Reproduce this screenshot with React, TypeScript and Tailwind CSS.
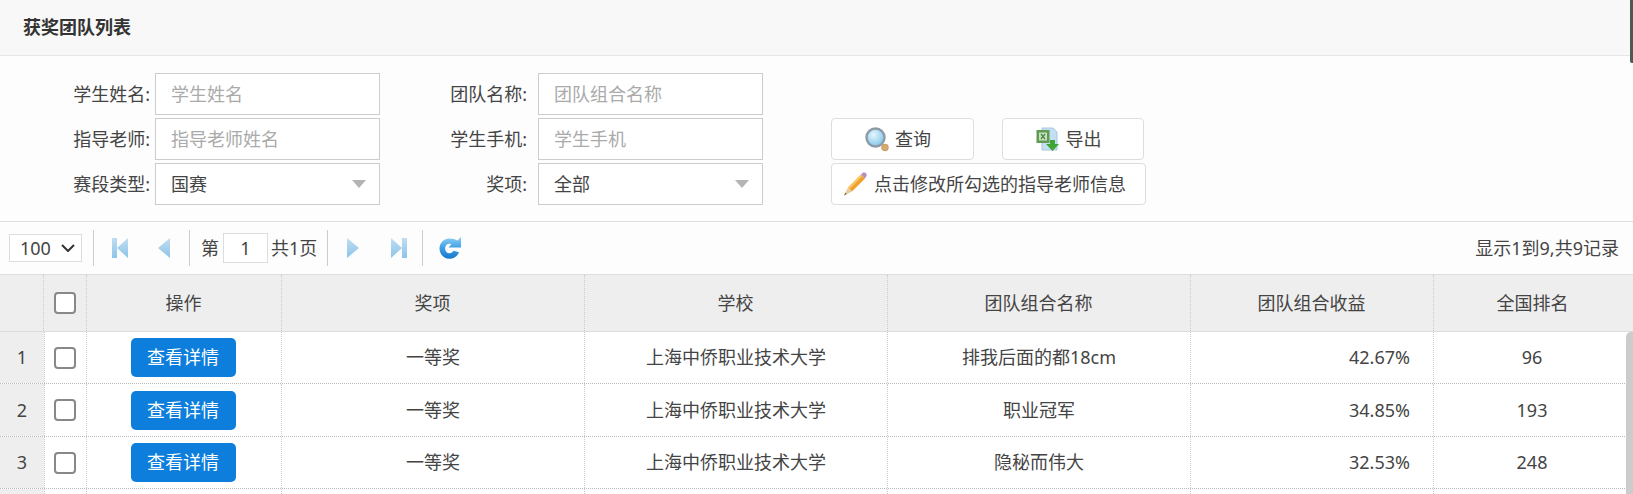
import React from 'react';

const columns = 'grid-cols-[44px_43px_195px_303px_303px_303px_243px_200px]';

const rows = [
  { id: 1, award: '一等奖', school: '上海中侨职业技术大学', team: '排我后面的都18cm', profit: '42.67%', rank: '96', height: 'h-[52px]' },
  { id: 2, award: '一等奖', school: '上海中侨职业技术大学', team: '职业冠军', profit: '34.85%', rank: '193', height: 'h-[53px]' },
  { id: 3, award: '一等奖', school: '上海中侨职业技术大学', team: '隐秘而伟大', profit: '32.53%', rank: '248', height: 'h-[52px]' },
];

function Label({ text, wide }: { text: string; wide?: boolean }) {
  return <span className={wide ? 'pr-[11px] text-right whitespace-nowrap' : 'pr-[5px] text-right whitespace-nowrap'}>{text}</span>;
}

function TextInput({ placeholder }: { placeholder: string }) {
  return (
    <input
      placeholder={placeholder}
      className="h-[42px] w-[225px] border border-[#ccc] bg-white px-[15px] text-[18px] outline-none placeholder:text-[#aaa]"
    />
  );
}

function SelectBox({ value }: { value: string }) {
  return (
    <div className="flex h-[42px] w-[225px] items-center justify-between border border-[#ccc] bg-white pl-[15px] pr-[13px]">
      <span>{value}</span>
      <svg width="14" height="8" viewBox="0 0 14 8">
        <path d="M0 0h14L7 8z" fill="#b4b4b4" />
      </svg>
    </div>
  );
}

function Separator() {
  return <div className="h-[36px] w-px bg-[#ccc]" />;
}

function SearchIcon() {
  return (
    <svg width="24" height="25" viewBox="0 0 24 25">
      <defs>
        <radialGradient id="lens" cx="40%" cy="35%" r="70%">
          <stop offset="0" stopColor="#e6f6fd" />
          <stop offset="1" stopColor="#7cc3ea" />
        </radialGradient>
      </defs>
      <circle cx="10.5" cy="10.5" r="9" fill="url(#lens)" stroke="#8c9ba6" strokeWidth="2.4" />
      <circle cx="20" cy="20.5" r="3.4" fill="#d6ab6c" stroke="#b08a52" strokeWidth="0.6" />
    </svg>
  );
}

function ExcelIcon() {
  return (
    <svg width="24" height="24" viewBox="0 0 24 24">
      <path d="M6 1h11l4 4v18H6z" fill="#c4dff2" stroke="#a8c6de" />
      <rect x="0.5" y="3" width="13" height="13" fill="#5f9c53" />
      <rect x="3" y="5.5" width="8" height="8" fill="#c9dfc0" />
      <path d="M5 7l4 5M9 7l-4 5" stroke="#4b8a42" strokeWidth="1.3" />
      <path d="M14 13h5v4h4l-6.500 7-6.500-7h4z" fill="#3fa535" />
    </svg>
  );
}

function PencilIcon() {
  return (
    <svg width="24" height="24" viewBox="0 0 24 24">
      <path d="M5 15.500 18 2.500l4 4L9 19.500z" fill="#f0a02c" />
      <path d="M5 15.500 18 2.500l1.500 1.500L6.500 17z" fill="#f9c866" />
      <path d="M18 2.500l1.800-1.800a2 2 0 0 1 2.400 0l1.100 1.100a2 2 0 0 1 0 2.400L22 6.500z" fill="#b58fc0" />
      <path d="M5 15.500 1 23.500l8-4z" fill="#e8c99a" />
      <path d="M2.400 20.700 1 23.500l2.800-1.400z" fill="#7a5a3a" />
    </svg>
  );
}

function FirstIcon() {
  return (
    <svg width="16" height="20" viewBox="0 0 16 20">
      <defs>
        <linearGradient id="first" x1="0" y1="0" x2="0" y2="1">
          <stop offset="0" stopColor="#c0def2" />
          <stop offset="1" stopColor="#8cc4e8" />
        </linearGradient>
      </defs>
      <path d="M0 0h5v20H0zM16 0v20L5 10z" fill="url(#first)" />
    </svg>
  );
}

function PrevIcon() {
  return (
    <svg width="12" height="20" viewBox="0 0 12 20">
      <defs>
        <linearGradient id="prev" x1="0" y1="0" x2="0" y2="1">
          <stop offset="0" stopColor="#c0def2" />
          <stop offset="1" stopColor="#8cc4e8" />
        </linearGradient>
      </defs>
      <path d="M12 0v20L0 10z" fill="url(#prev)" />
    </svg>
  );
}

function NextIcon() {
  return (
    <svg width="12" height="20" viewBox="0 0 12 20">
      <defs>
        <linearGradient id="next" x1="0" y1="0" x2="0" y2="1">
          <stop offset="0" stopColor="#c0def2" />
          <stop offset="1" stopColor="#8cc4e8" />
        </linearGradient>
      </defs>
      <path d="M0 0v20l12-10z" fill="url(#next)" />
    </svg>
  );
}

function LastIcon() {
  return (
    <svg width="16" height="20" viewBox="0 0 16 20">
      <defs>
        <linearGradient id="last" x1="0" y1="0" x2="0" y2="1">
          <stop offset="0" stopColor="#c0def2" />
          <stop offset="1" stopColor="#8cc4e8" />
        </linearGradient>
      </defs>
      <path d="M0 0v20l11-10zM11 0h5v20h-5z" fill="url(#last)" />
    </svg>
  );
}

function RefreshIcon() {
  return (
    <svg width="22" height="22" viewBox="0 0 22 22">
      <defs>
        <linearGradient id="refresh" x1="0" y1="0" x2="0" y2="1">
          <stop offset="0" stopColor="#8dd0f5" />
          <stop offset="0.5" stopColor="#3f9fe4" />
          <stop offset="1" stopColor="#1478cc" />
        </linearGradient>
      </defs>
      <path
        d="M10.500 1.500C4.800 1.500.5 6 .5 11.500S4.800 21.800 10.500 21.800c4.400 0 8-2.600 9.500-6.500l-5.500-1.500c-.8 1.600-2.200 2.500-4 2.500-2.500 0-4.400-2-4.400-4.800s1.900-4.700 4.400-4.700c.7 0 1.300.1 1.900.4L9.500 10.500H22V0l-3.500 3.600C16.400 2.300 13.600 1.500 10.500 1.500z"
        fill="url(#refresh)"
      />
    </svg>
  );
}

export default function App() {
  return (
    <div
      className="relative h-[494px] overflow-hidden bg-[#fdfdfd] text-[18px] text-[#444]"
      style={{ fontFamily: '"Noto Sans", "Noto Sans CJK SC", sans-serif' }}
    >
      {/* 右上角露出的滚动条 */}
      <div className="absolute right-0 top-0 h-[63px] w-[3px] rounded-bl-[2px] bg-[#4c5a50]" />

      <div className="flex h-[56px] items-center border-b border-[#e5e5e5] bg-[#f8f8f8] pl-[23px]">
        <span className="font-bold text-[#333]">获奖团队列表</span>
      </div>

      {/* 查询条件 */}
      <div className="grid h-[166px] grid-cols-[155px_225px_158px_225px_68px_auto] content-start items-center gap-y-[3px] border-b border-[#e0e0e0] pt-[17px]">
        <Label text="学生姓名:" />
        <TextInput placeholder="学生姓名" />
        <Label wide text="团队名称:" />
        <TextInput placeholder="团队组合名称" />
        <div />
        <div />

        <Label text="指导老师:" />
        <TextInput placeholder="指导老师姓名" />
        <Label wide text="学生手机:" />
        <TextInput placeholder="学生手机" />
        <div />
        <div className="flex gap-[28px]">
          <button className="flex h-[42px] w-[143px] items-center justify-center gap-[6px] rounded-[4px] border border-[#ddd] bg-white pr-[9px]">
            <SearchIcon />
            查询
          </button>
          <button className="flex h-[42px] w-[142px] items-center justify-center gap-[6px] rounded-[4px] border border-[#ddd] bg-white pr-[9px]">
            <ExcelIcon />
            导出
          </button>
        </div>

        <Label text="赛段类型:" />
        <SelectBox value="国赛" />
        <Label wide text="奖项:" />
        <SelectBox value="全部" />
        <div />
        <button className="flex h-[42px] w-[315px] items-center gap-[7px] rounded-[4px] border border-[#ddd] bg-white pl-[11px]">
          <PencilIcon />
          点击修改所勾选的指导老师信息
        </button>
      </div>

      {/* 分页工具栏 */}
      <div className="flex h-[52px] items-center pl-[9px] pr-[14px]">
        <div className="flex h-[28px] w-[73px] items-center justify-between border border-[#ddd] bg-white pl-[10px] pr-[6px]">
          <span>100</span>
          <svg width="14" height="8" viewBox="0 0 14 8">
            <path d="M1 1l6 6 6-6" fill="none" stroke="#333" strokeWidth="2" />
          </svg>
        </div>
        <div className="ml-[11px] flex items-center">
          <Separator />
          <div className="ml-[18px]"><FirstIcon /></div>
          <div className="ml-[30px]"><PrevIcon /></div>
          <div className="ml-[19px]"><Separator /></div>
          <span className="ml-[11px]">第</span>
          <div className="ml-[4px] flex h-[30px] w-[45px] items-center justify-center border border-[#ddd] bg-white">1</div>
          <span className="ml-[3px]">共1页</span>
          <div className="ml-[10px]"><Separator /></div>
          <div className="ml-[19px]"><NextIcon /></div>
          <div className="ml-[32px]"><LastIcon /></div>
          <div className="ml-[15px]"><Separator /></div>
          <div className="ml-[16px]"><RefreshIcon /></div>
        </div>
        <span className="ml-auto">显示1到9,共9记录</span>
      </div>

      {/* 数据表格 */}
      <div className={`grid ${columns} h-[58px] items-stretch border-y border-[#ddd] bg-[#eee]`}>
        <div className="border-r border-dotted border-[#ccc]" />
        <div className="flex items-center justify-center border-r border-dotted border-[#ccc] pr-px">
          <div className="h-[22px] w-[22px] rounded-[4px] border-2 border-[#888] bg-white" />
        </div>
        {['操作', '奖项', '学校', '团队组合名称', '团队组合收益'].map(title => (
          <div key={title} className="flex items-center justify-center border-r border-dotted border-[#ccc] pr-px">
            {title}
          </div>
        ))}
        <div className="flex items-center justify-center pr-[3px]">全国排名</div>
      </div>

      {rows.map(row => (
        <div key={row.id} className={`grid ${columns} ${row.height} items-stretch border-b border-dotted border-[#bbb] bg-white`}>
          <div className="flex items-center justify-center bg-[#eee]">{row.id}</div>
          <div className="flex items-center justify-center border-x border-dotted border-[#ccc] pr-px">
            <div className="h-[22px] w-[22px] rounded-[4px] border-2 border-[#888] bg-white" />
          </div>
          <div className="flex items-center justify-center border-r border-dotted border-[#ccc] pr-[2px]">
            <button className="h-[39px] w-[105px] rounded-[5px] bg-[#0d7edb] text-white">查看详情</button>
          </div>
          <div className="flex items-center justify-center border-r border-dotted border-[#ccc]">{row.award}</div>
          <div className="flex items-center justify-center border-r border-dotted border-[#ccc]">{row.school}</div>
          <div className="flex items-center justify-center border-r border-dotted border-[#ccc]">{row.team}</div>
          <div className="flex items-center justify-end border-r border-dotted border-[#ccc] pr-[23px]">{row.profit}</div>
          <div className="flex items-center justify-center pr-[4px]">{row.rank}</div>
        </div>
      ))}
      <div className={`grid ${columns} h-[7px] bg-white`}>
        <div className="bg-[#eee]" />
        <div className="border-x border-dotted border-[#ccc]" />
        <div className="border-r border-dotted border-[#ccc]" />
        <div className="border-r border-dotted border-[#ccc]" />
        <div className="border-r border-dotted border-[#ccc]" />
        <div className="border-r border-dotted border-[#ccc]" />
        <div className="border-r border-dotted border-[#ccc]" />
        <div />
      </div>

      {/* 表格滚动条 */}
      <div className="absolute bottom-0 right-0 top-[332px] w-[7px] rounded-tl-[5px] bg-[#ccc]" />
    </div>
  );
}
